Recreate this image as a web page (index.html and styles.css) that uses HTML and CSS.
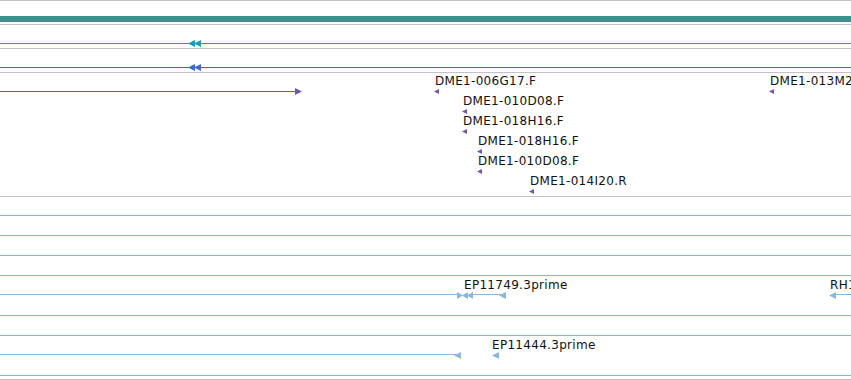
FILE: index.html
```html
<!DOCTYPE html>
<html>
<head>
<meta charset="utf-8">
<link rel="stylesheet" href="styles.css">
</head>
<body>
<div class="browser">
  <div class="track track-top"></div>
  <div class="track track-b">
    <div class="bar"></div>
  </div>
  <div class="track track-c">
    <div class="fline cyan" style="left:0;width:851px"></div>
    <svg class="glyph" style="left:188px;top:15px" width="14" height="7" viewBox="0 0 14 7"><polygon points="0,3.5 7,0 7,7" fill="#1a9bbb"/><polygon points="6,3.5 13,0 13,7" fill="#1a9bbb"/></svg>
  </div>
  <div class="track track-d">
    <div class="fline blue" style="left:0;width:851px"></div>
    <svg class="glyph" style="left:188px;top:15px" width="14" height="7" viewBox="0 0 14 7"><polygon points="0,3.5 7,0 7,7" fill="#3b6bcc"/><polygon points="6,3.5 13,0 13,7" fill="#3b6bcc"/></svg>
  </div>
  <div class="track track-e">
    <div class="fline purple" style="left:0;width:297px"></div>
    <svg class="glyph" style="left:295px;top:15px" width="7" height="7" viewBox="0 0 7 7"><polygon points="7,3.5 0,0 0,7" fill="#7058a8"/></svg>

    <span class="label" style="left:435px;top:1px">DME1-006G17.F</span>
    <svg class="glyph" style="left:434px;top:16px" width="5" height="5" viewBox="0 0 5 5"><polygon points="0,2.5 5,0 5,5" fill="#7058a8"/></svg>

    <span class="label" style="left:463px;top:21px">DME1-010D08.F</span>
    <svg class="glyph" style="left:462px;top:36px" width="5" height="5" viewBox="0 0 5 5"><polygon points="0,2.5 5,0 5,5" fill="#7058a8"/></svg>

    <span class="label" style="left:463px;top:41px">DME1-018H16.F</span>
    <svg class="glyph" style="left:462px;top:56px" width="5" height="5" viewBox="0 0 5 5"><polygon points="0,2.5 5,0 5,5" fill="#7058a8"/></svg>

    <span class="label" style="left:478px;top:61px">DME1-018H16.F</span>
    <svg class="glyph" style="left:477px;top:76px" width="5" height="5" viewBox="0 0 5 5"><polygon points="0,2.5 5,0 5,5" fill="#7058a8"/></svg>

    <span class="label" style="left:478px;top:81px">DME1-010D08.F</span>
    <svg class="glyph" style="left:477px;top:96px" width="5" height="5" viewBox="0 0 5 5"><polygon points="0,2.5 5,0 5,5" fill="#7058a8"/></svg>

    <span class="label" style="left:530px;top:101px">DME1-014I20.R</span>
    <svg class="glyph" style="left:529px;top:116px" width="5" height="5" viewBox="0 0 5 5"><polygon points="0,2.5 5,0 5,5" fill="#7058a8"/></svg>

    <span class="label" style="left:770px;top:1px">DME1-013M2</span>
    <svg class="glyph" style="left:769px;top:16px" width="5" height="5" viewBox="0 0 5 5"><polygon points="0,2.5 5,0 5,5" fill="#7058a8"/></svg>
  </div>
  <div class="track track-f">
    <div class="row first"></div>
    <div class="row"></div>
    <div class="row"></div>
    <div class="row"></div>
    <div class="row open">
      <div class="fline light" style="left:0;width:460px"></div>
      <svg class="glyph" style="left:457px;top:16px" width="6" height="7" viewBox="0 0 6 7"><polygon points="6,3.5 0,0 0,7" fill="#8ab8dc"/></svg>
      <svg class="glyph" style="left:462px;top:16px" width="12" height="7" viewBox="0 0 12 7"><polygon points="0,3.5 6,0 6,7" fill="#8ab8dc"/><polygon points="5,3.5 11,0 11,7" fill="#8ab8dc"/></svg>
      <div class="fline light" style="left:470px;width:32px"></div>
      <svg class="glyph" style="left:499px;top:16px" width="7" height="7" viewBox="0 0 7 7"><polygon points="0,3.5 7,0 7,7" fill="#8ab8dc"/></svg>
      <span class="label" style="left:464px;top:2px">EP11749.3prime</span>

      <div class="fline light" style="left:834px;width:17px"></div>
      <svg class="glyph" style="left:829px;top:16px" width="7" height="7" viewBox="0 0 7 7"><polygon points="0,3.5 7,0 7,7" fill="#8ab8dc"/></svg>
      <span class="label" style="left:830px;top:2px">RH1</span>
    </div>
    <div class="row"></div>
    <div class="row"></div>
    <div class="row open">
      <div class="fline light" style="left:0;width:458px"></div>
      <svg class="glyph" style="left:454px;top:16px" width="7" height="7" viewBox="0 0 7 7"><polygon points="0,3.5 7,0 7,7" fill="#8ab8dc"/></svg>
      <svg class="glyph" style="left:492px;top:16px" width="7" height="7" viewBox="0 0 7 7"><polygon points="0,3.5 7,0 7,7" fill="#8ab8dc"/></svg>
      <span class="label" style="left:492px;top:2px">EP11444.3prime</span>
    </div>
    <div class="row"></div>
    <div class="spacer"></div>
  </div>
</div>
</body>
</html>
```

FILE: styles.css
```css
html, body {
  margin: 0;
  padding: 0;
  background: #ffffff;
}

.browser {
  width: 851px;
  height: 380px;
  overflow: hidden;
  display: flex;
  flex-direction: column;
  font-family: "DejaVu Sans", "Liberation Sans", sans-serif;
  font-size: 12px;
  line-height: 14px;
  letter-spacing: 0.3px;
  color: #111111;
}

.track {
  position: relative;
  box-sizing: border-box;
  border-bottom: 1px solid #c2c2c2;
  flex: none;
  overflow: hidden;
}

.track-top { height: 1px; }
.track-b { height: 24px; }
.track-c { height: 24px; }
.track-d { height: 24px; }
.track-e { height: 124px; overflow: visible; }
.track-f {
  height: 183px;
  display: flex;
  flex-direction: column;
}

.bar {
  position: absolute;
  left: 0;
  right: 0;
  top: 15px;
  height: 6px;
  background: #3f8f90;
}

.fline {
  position: absolute;
  top: 18px;
  height: 1px;
}

.cyan { background: #1a9bbb; }
.blue { background: #3b6bcc; }
.purple { background: #7058a8; }
.light { background: #8ab8dc; }

.glyph {
  position: absolute;
  display: block;
}

.label {
  position: absolute;
  white-space: nowrap;
}

.row {
  position: relative;
  box-sizing: border-box;
  height: 20px;
  flex: none;
  border-bottom: 1px solid #8ab8dc;
}

.row.first { height: 19px; }
.row.open { border-bottom: none; }

.spacer {
  height: 3px;
  flex: none;
}
```
